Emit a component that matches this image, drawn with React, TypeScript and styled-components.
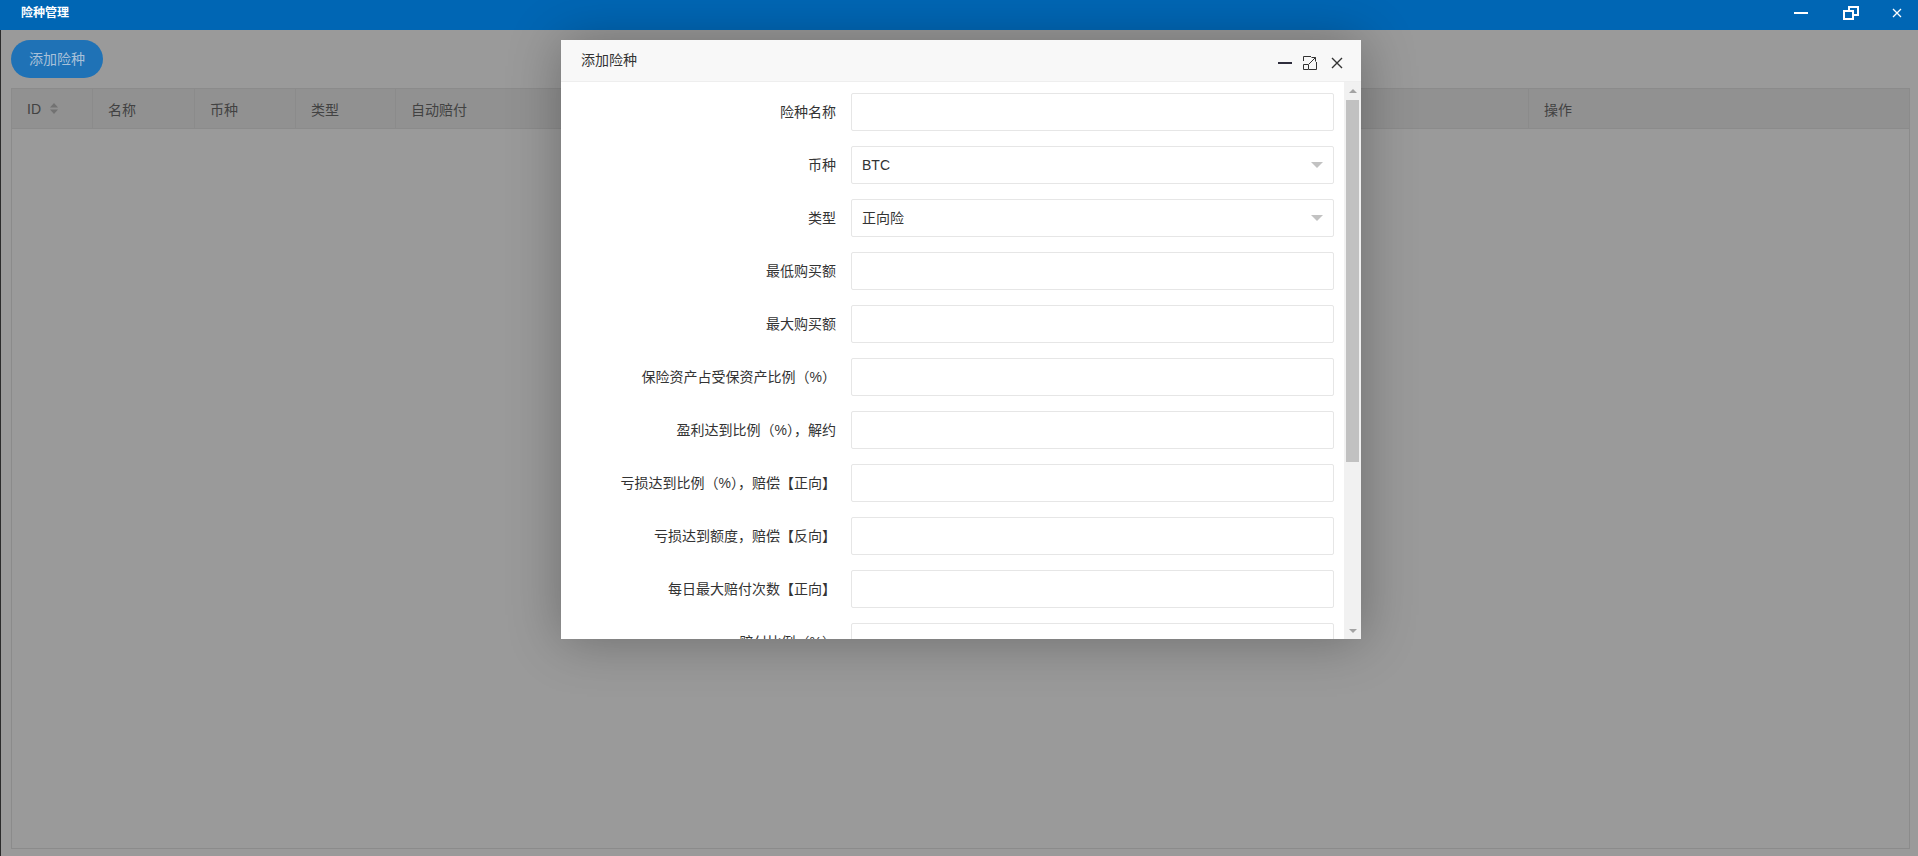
import styled, { createGlobalStyle } from "styled-components";

const GlobalStyle = createGlobalStyle`
  * {
    box-sizing: border-box;
  }
  html,
  body {
    margin: 0;
    padding: 0;
    height: 100%;
    overflow: hidden;
  }
  body {
    font-family: "Liberation Sans", "Noto Sans CJK SC", sans-serif;
    font-size: 14px;
    color: #333;
  }
  #root {
    height: 100%;
  }
`;

const Window = styled.div`
  position: relative;
  height: 856px;
  display: flex;
  flex-direction: column;
`;

const TitleBar = styled.div`
  height: 30px;
  flex-shrink: 0;
  display: flex;
  justify-content: space-between;
  background: #0066b4;
  color: #fff;
  padding-left: 21px;
`;

const AppTitle = styled.span`
  font-size: 12px;
  font-weight: bold;
  line-height: 27px;
`;

const WinControls = styled.div`
  display: flex;
`;

const WinButton = styled.div<{ $w: number }>`
  width: ${(p) => p.$w}px;
  height: 26px;
  display: flex;
  align-items: center;
  justify-content: center;
`;

const Main = styled.div`
  flex: 1;
  min-height: 0;
  display: flex;
  flex-direction: column;
  background: #9a9a9a;
  border-left: 1px solid #2b2b2b;
  padding: 10px 8px 7px 10px;
`;

const Toolbar = styled.div`
  display: flex;
  margin-bottom: 10px;
`;

const AddButton = styled.button`
  height: 38px;
  padding: 0 18px;
  border: none;
  border-radius: 19px;
  background: #1f72b6;
  color: #a9c1d9;
  font-family: inherit;
  font-size: 14px;
  line-height: 38px;
`;

const columns = "81px 102px 101px 100px 283px 283px 283px 284px 1fr";

const Table = styled.div`
  flex: 1;
  display: flex;
  flex-direction: column;
  border: 1px solid #8b8b8b;
  background: #9a9a9a;
`;

const HeadRow = styled.div`
  display: grid;
  grid-template-columns: ${columns};
  background: #919191;
  border-bottom: 1px solid #8b8b8b;
`;

const HeadCell = styled.div`
  height: 39px;
  padding: 0 15px;
  display: flex;
  align-items: center;
  gap: 9px;
  border-right: 1px solid #8b8b8b;
  color: #424242;
  font-size: 14px;
  white-space: nowrap;
  overflow: hidden;
  &:last-child {
    border-right: none;
  }
`;

const TableBody = styled.div`
  flex: 1;
`;

const Layer = styled.div`
  position: absolute;
  inset: 0;
  display: flex;
  justify-content: center;
  align-items: flex-start;
  padding: 40px 0 0 4px;
`;

const Dialog = styled.div`
  width: 800px;
  height: 599px;
  display: flex;
  flex-direction: column;
  background: #fff;
  box-shadow: 1px 1px 50px rgba(0, 0, 0, 0.3);
`;

const DialogHead = styled.div`
  height: 42px;
  flex-shrink: 0;
  display: flex;
  align-items: center;
  justify-content: space-between;
  padding: 0 18px 0 20px;
  background: #f8f8f8;
  border-bottom: 1px solid #eee;
`;

const DialogTitle = styled.span`
  font-size: 14px;
  color: #333;
  line-height: 41px;
`;

const HeadIcons = styled.div`
  display: flex;
  align-items: center;
  padding-top: 4px;
`;

const HeadIcon = styled.svg<{ $gap?: number }>`
  display: block;
  margin-right: ${(p) => p.$gap ?? 0}px;
`;

const DialogBody = styled.div`
  flex: 1;
  min-height: 0;
  display: flex;
`;

const Viewport = styled.div`
  flex: 1;
  overflow: hidden;
`;

const ScrollBar = styled.div`
  width: 17px;
  flex-shrink: 0;
  display: flex;
  flex-direction: column;
  background: #f1f1f1;
`;

const ScrollArrow = styled.div<{ $down?: boolean }>`
  height: 17px;
  display: flex;
  align-items: center;
  justify-content: center;
  &::before {
    content: "";
    border: 4px solid transparent;
    ${(p) =>
      p.$down
        ? "border-top-color: #a3a3a3; border-bottom: none;"
        : "border-bottom-color: #a3a3a3; border-top: none;"}
  }
`;

const ScrollTrack = styled.div`
  flex: 1;
  padding: 1px 2px 0;
`;

const ScrollThumb = styled.div`
  height: 362px;
  background: #c1c1c1;
`;

const Form = styled.form`
  padding: 11px 10px 50px 0;
`;

const FormItem = styled.div`
  display: grid;
  grid-template-columns: 290px 1fr;
  align-items: center;
  margin-bottom: 15px;
`;

const Label = styled.label`
  padding-right: 15px;
  text-align: right;
  font-size: 14px;
  line-height: 20px;
  color: #333;
  white-space: nowrap;
`;

const Input = styled.input`
  height: 38px;
  width: 100%;
  padding: 0 10px;
  border: 1px solid #e6e6e6;
  border-radius: 2px;
  font-family: inherit;
  font-size: 14px;
  color: #333;
  outline: none;
`;

const Select = styled.div`
  position: relative;
  height: 38px;
  padding: 0 10px;
  border: 1px solid #e6e6e6;
  border-radius: 2px;
  font-size: 14px;
  line-height: 36px;
  color: #333;
  &::after {
    content: "";
    position: absolute;
    right: 10px;
    top: 50%;
    margin-top: -3px;
    border: 6px solid transparent;
    border-top-color: #c2c2c2;
    border-bottom: none;
  }
`;

const ButtonRow = styled.div`
  display: flex;
  gap: 10px;
`;

const SubmitButton = styled.button<{ $plain?: boolean }>`
  height: 38px;
  padding: 0 18px;
  border: 1px solid ${(p) => (p.$plain ? "#c9c9c9" : "#1e9fff")};
  border-radius: 2px;
  background: ${(p) => (p.$plain ? "#fff" : "#1e9fff")};
  color: ${(p) => (p.$plain ? "#555" : "#fff")};
  font-family: inherit;
  font-size: 14px;
`;

const headers = ["ID", "名称", "币种", "类型", "自动赔付", "最低购买额", "最大购买额", "状态", "操作"];

type Field = { label: string; select?: string };

const fields: Field[] = [
  { label: "险种名称" },
  { label: "币种", select: "BTC" },
  { label: "类型", select: "正向险" },
  { label: "最低购买额" },
  { label: "最大购买额" },
  { label: "保险资产占受保资产比例（%）" },
  { label: "盈利达到比例（%），解约" },
  { label: "亏损达到比例（%），赔偿【正向】" },
  { label: "亏损达到额度，赔偿【反向】" },
  { label: "每日最大赔付次数【正向】" },
  { label: "赔付比例（%）" },
  { label: "自动赔付", select: "是" },
  { label: "排序" },
];

function SortIcon() {
  return (
    <svg width="8" height="11" viewBox="0 0 8 11">
      <polygon points="0,4.5 4,0 8,4.5" fill="#727272" />
      <polygon points="0,6.5 8,6.5 4,11" fill="#727272" />
    </svg>
  );
}

export default function App() {
  return (
    <>
      <GlobalStyle />
      <Window>
        <TitleBar>
          <AppTitle>险种管理</AppTitle>
          <WinControls>
            <WinButton $w={50}>
              <svg width="14" height="2" viewBox="0 0 14 2">
                <rect width="14" height="2" fill="#fff" />
              </svg>
            </WinButton>
            <WinButton $w={50}>
              <svg width="17" height="14" viewBox="0 0 17 14">
                <rect x="6" y="1" width="9" height="8" fill="none" stroke="#fff" strokeWidth="2" />
                <rect x="1" y="5" width="9" height="8" fill="#0066b4" stroke="#fff" strokeWidth="2" />
              </svg>
            </WinButton>
            <WinButton $w={42}>
              <svg width="10" height="10" viewBox="0 0 10 10">
                <path d="M1 1L9 9M9 1L1 9" stroke="#fff" strokeWidth="1.3" />
              </svg>
            </WinButton>
          </WinControls>
        </TitleBar>

        <Main>
          <Toolbar>
            <AddButton>添加险种</AddButton>
          </Toolbar>
          <Table>
            <HeadRow>
              {headers.map((h) => (
                <HeadCell key={h}>
                  {h}
                  {h === "ID" && <SortIcon />}
                </HeadCell>
              ))}
            </HeadRow>
            <TableBody />
          </Table>
        </Main>

        <Layer>
          <Dialog>
            <DialogHead>
              <DialogTitle>添加险种</DialogTitle>
              <HeadIcons>
                <HeadIcon $gap={11} width="14" height="2" viewBox="0 0 14 2">
                  <rect width="14" height="2" fill="#2e2d3c" />
                </HeadIcon>
                <HeadIcon $gap={14} width="14" height="14" viewBox="0 0 14 14">
                  <path
                    d="M0.5 5V0.5H8M13.5 6V13.5H6M0.5 8.5H5.5V13.5H0.5ZM6 8L12.5 1.5M8.5 1.5H12.5V5.5"
                    fill="none"
                    stroke="#333"
                    strokeWidth="1"
                  />
                </HeadIcon>
                <HeadIcon width="12" height="12" viewBox="0 0 12 12">
                  <path d="M1 1L11 11M11 1L1 11" stroke="#333" strokeWidth="1.4" />
                </HeadIcon>
              </HeadIcons>
            </DialogHead>
            <DialogBody>
              <Viewport>
                <Form>
                  {fields.map((f) => (
                    <FormItem key={f.label}>
                      <Label>{f.label}</Label>
                      {f.select ? <Select>{f.select}</Select> : <Input />}
                    </FormItem>
                  ))}
                  <FormItem>
                    <span />
                    <ButtonRow>
                      <SubmitButton type="button">立即提交</SubmitButton>
                      <SubmitButton type="button" $plain>
                        重置
                      </SubmitButton>
                    </ButtonRow>
                  </FormItem>
                </Form>
              </Viewport>
              <ScrollBar>
                <ScrollArrow />
                <ScrollTrack>
                  <ScrollThumb />
                </ScrollTrack>
                <ScrollArrow $down />
              </ScrollBar>
            </DialogBody>
          </Dialog>
        </Layer>
      </Window>
    </>
  );
}
